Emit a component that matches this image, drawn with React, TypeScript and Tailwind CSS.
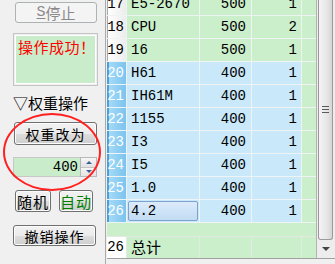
const CN = { fontFamily: '"Noto Sans CJK SC", "Noto Sans", sans-serif' };
const MONO = { fontFamily: '"Liberation Mono", "Noto Sans CJK SC", monospace' };

type Row = { no: number; name: string; w: string; n: string; blue: boolean; selected?: boolean };

const rows: Row[] = [
  { no: 17, name: "E5-2670", w: "500", n: "1", blue: false },
  { no: 18, name: "CPU", w: "500", n: "2", blue: false },
  { no: 19, name: "16", w: "500", n: "1", blue: false },
  { no: 20, name: "H61", w: "400", n: "1", blue: true },
  { no: 21, name: "IH61M", w: "400", n: "1", blue: true },
  { no: 22, name: "1155", w: "400", n: "1", blue: true },
  { no: 23, name: "I3", w: "400", n: "1", blue: true },
  { no: 24, name: "I5", w: "400", n: "1", blue: true },
  { no: 25, name: "1.0", w: "400", n: "1", blue: true },
  { no: 26, name: "4.2", w: "400", n: "1", blue: true, selected: true },
];

function WinButton({ children, className = "" }: { children: React.ReactNode; className?: string }) {
  return (
    <div
      className={
        "flex items-center justify-center whitespace-nowrap rounded-[3px] border border-[#707070] bg-[linear-gradient(to_bottom,#f2f2f2_0%,#ebebeb_50%,#dddddd_51%,#cfcfcf_100%)] text-[14px] leading-none tracking-[1px] text-black shadow-[inset_0_0_0_1px_#fcfcfc] " +
        className
      }
      style={CN}
    >
      {children}
    </div>
  );
}

function GridRow({ r }: { r: Row }) {
  const cell = r.blue ? "bg-[#c9e8f9]" : "bg-[#cbeecb]";
  return (
    <div className="flex h-[23px] border-b border-[#eef3f3]">
      <div
        className={
          "flex w-[20px] items-center justify-end pr-[2px] text-[14px] border-r border-[#eef3f3] " +
          (r.blue
            ? "text-white bg-[linear-gradient(to_right,#4f9fd2_0,#4f9fd2_2px,#a4daf8_2px,#7cc3ee_100%)]"
            : "text-black bg-[linear-gradient(to_right,#a8a8a8_0,#a8a8a8_1px,#ffffff_1px,#ececec_100%)]")
        }
        style={MONO}
      >
        {r.no}
      </div>
      <div className={"w-[73px] border-r border-[#eef3f3] " + cell}>
        {r.selected ? (
          <div
            className="m-[1px] flex h-[20px] items-center rounded-[2px] border border-[#7da2ce] bg-[linear-gradient(to_bottom,#dcebfc,#c1dcf3)] pl-[2px] text-[14px] text-black"
            style={MONO}
          >
            {r.name}
          </div>
        ) : (
          <div className="flex h-full items-center pl-[4px] text-[14px] text-black" style={MONO}>
            {r.name}
          </div>
        )}
      </div>
      <div
        className={"flex w-[52px] items-center justify-end pr-[5px] text-[14px] text-black border-r border-[#eef3f3] " + cell}
        style={MONO}
      >
        {r.w}
      </div>
      <div
        className={"flex w-[50px] items-center justify-end pr-[4px] text-[14px] text-black border-r border-[#eef3f3] " + cell}
        style={MONO}
      >
        {r.n}
      </div>
      <div className="flex-1 bg-[#cbeecb]" />
    </div>
  );
}

export default function App() {
  return (
    <div className="flex h-[264px] w-[335px] overflow-hidden bg-[#f0f0f0]">
      {/* left control panel */}
      <div className="relative flex w-[106px] shrink-0 flex-col border-r border-[#a9a9a9]">
        <div
          className="ml-[15px] mt-[2px] flex h-[21px] w-[82px] items-center justify-center rounded-[3px] border border-[#adb2b5] bg-[#f4f4f4] text-[15px] leading-none text-[#8a8a8a]"
          style={CN}
        >
          <span className="underline underline-offset-2" style={MONO}>S</span>停止
        </div>

        <div className="ml-[13px] mt-[10px] h-[53px] w-[85px] border border-[#c4c4c4] p-px">
          <div className="h-full w-full whitespace-nowrap border border-white bg-[#c9ecca] pl-[2px] pt-[3px] text-[15px] leading-[16px] tracking-[0.5px] text-[#ff0000]" style={CN}>
            操作成功！
          </div>
        </div>

        <div className="ml-[13px] mt-[8px] h-[18px] text-[15px] leading-[18px] text-black" style={CN}>
          ▽权重操作
        </div>

        <WinButton className="ml-[14px] mt-[10px] h-[23px] w-[83px]">权重改为</WinButton>

        <div className="ml-[13px] mt-[12px] flex h-[20px] w-[84px]">
          <div
            className="flex h-full w-[67px] items-center justify-end border border-r-0 border-[#c8c8c8] bg-[#c9ecca] pr-[2px] text-[14px] text-black"
            style={MONO}
          >
            400
          </div>
          <div className="flex h-full w-[17px] flex-col border border-[#b8b8b8] bg-white">
            <div className="flex flex-1 items-center justify-center border-b border-[#c4c4c4] bg-[linear-gradient(to_bottom,#f6f6f6,#e2e2e2)]">
              <div className="h-0 w-0 border-x-[3px] border-b-[3px] border-x-transparent border-b-[#3a5f95]" />
            </div>
            <div className="flex flex-1 items-center justify-center bg-[linear-gradient(to_bottom,#f6f6f6,#e2e2e2)]">
              <div className="h-0 w-0 border-x-[3px] border-t-[3px] border-x-transparent border-t-[#3a5f95]" />
            </div>
          </div>
        </div>

        <div className="ml-[15px] mt-[13px] flex h-[22px] gap-[8px]">
          <WinButton className="h-full w-[36px] text-[15px]">随机</WinButton>
          <WinButton className="h-full w-[34px] text-[15px] !text-[#008000]">自动</WinButton>
        </div>

        <WinButton className="ml-[13px] mt-[13px] h-[21px] w-[83px]">撤销操作</WinButton>

        {/* red highlight ring */}
        <div className="pointer-events-none absolute left-[3px] top-[113px] h-[78px] w-[98px] rounded-[50%] border-2 border-[#ff2020]" />
      </div>

      {/* data grid */}
      <div className="ml-px flex h-[259px] flex-1 border-b border-[#a0a0a0]">
        <div className="flex w-[209px] flex-col bg-[#cbeecb]">
          <div className="h-[237px] overflow-hidden">
            <div className="-mt-[7px]">
              {rows.map((r) => (
                <GridRow key={r.no} r={r} />
              ))}
            </div>
          </div>
          <div className="flex h-[22px] border-t border-[#e2eae2]">
            <div className="flex w-[20px] items-center justify-end border-r border-[#e2eae2] bg-white pr-[2px] text-[14px] text-black" style={MONO}>
              26
            </div>
            <div className="flex w-[73px] items-center border-r border-[#e2eae2] pl-[4px] text-[15px] text-black" style={CN}>
              总计
            </div>
            <div className="w-[52px] border-r border-[#e2eae2]" />
            <div className="w-[50px] border-r border-[#e2eae2]" />
            <div className="flex-1" />
          </div>
        </div>

        {/* vertical scrollbar */}
        <div className="flex w-[19px] flex-col border-l border-[#b4b4b4] bg-[#ededed]">
          <div className="ml-px flex h-[240px] w-[15px] flex-col items-center justify-center rounded-b-[3px] border border-t-0 border-[#9a9a9a] bg-[linear-gradient(to_right,#f4f4f4,#e6e6e6_60%,#d6d6d6)]">
            <div className="-mt-[20px] flex flex-col gap-[2px]">
              <div className="h-px w-[7px] bg-[#5a5a5a]" />
              <div className="h-px w-[7px] bg-[#5a5a5a]" />
              <div className="h-px w-[7px] bg-[#5a5a5a]" />
            </div>
          </div>
          <div className="flex flex-1 items-center justify-center">
            <div className="h-0 w-0 border-x-[4px] border-t-[4px] border-x-transparent border-t-[#444]" />
          </div>
        </div>
      </div>
    </div>
  );
}
